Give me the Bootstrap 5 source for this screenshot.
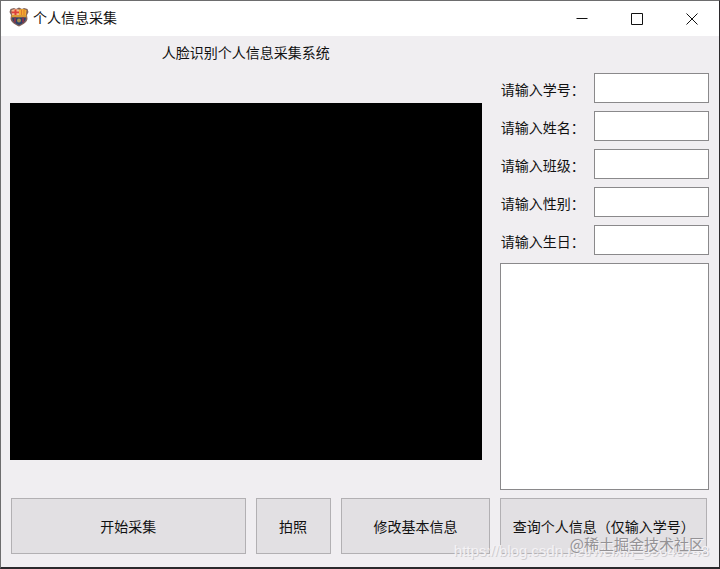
<!DOCTYPE html>
<html lang="zh-CN">
<head>
<meta charset="utf-8">
<meta name="viewport" content="width=device-width, initial-scale=1">
<title>个人信息采集</title>
<link href="https://cdn.jsdelivr.net/npm/bootstrap@5.3.0/dist/css/bootstrap.min.css" rel="stylesheet">
<style>
body{font:14px/20px "Noto Sans CJK SC",sans-serif;color:#111;background:#f0eef1}
.app-window{border:1px solid #6d6d6e;border-right-color:#2b292c;border-bottom:2px solid #2b292c}
.titlebar{height:35px;padding-bottom:3px;background:#fff}
.win-btn{width:55px;height:32px;border:0;background:none;padding:0;color:#111}
.main-area{display:grid;grid-template-columns:minmax(0,471fr) minmax(0,209fr);grid-template-rows:1fr auto;column-gap:18px;padding:0 10px 13px 9px}
.left-pane{padding-bottom:38px}
.heading{padding-top:6px;height:67px;font-size:14px;line-height:20px}
.video{background:#000;flex:1 1 auto}
.right-pane{padding-top:37px;gap:8px}
.field-label{padding:2px 0 0 1px}
.field-box{width:115px;height:30px;border:1px solid #8a898b;background:#fff;padding:2px 4px;border-radius:0}
.result{border:1px solid #8a898b;background:#fff;resize:none;flex:1 1 auto;margin-bottom:8px;border-radius:0}
.actions{display:grid;grid-template-columns:minmax(0,235fr) minmax(0,75fr) minmax(0,150fr) minmax(0,207fr);gap:10px;grid-column:1/-1;padding:0 2px 0 1px}
.act{height:56px;border:1px solid #b2b0b3;background:#e2e0e3;color:#111;padding:0;border-radius:0;white-space:nowrap}
.marks{right:0;bottom:0;pointer-events:none}
.mark-site{position:absolute;right:15px;bottom:11px;font-size:15px;line-height:24px;color:#949295;white-space:nowrap;text-shadow:1px 1px 0 #f3f1f4}
.mark-url{position:absolute;right:10px;bottom:6px;font:15px/20px "Liberation Sans",sans-serif;color:#f4f2f5;white-space:nowrap;text-shadow:1px 1px 0 #cfcdd0}
</style>
<script src="https://cdn.jsdelivr.net/npm/bootstrap@5.3.0/dist/js/bootstrap.bundle.min.js" defer></script>
</head>
<body>
<div class="app-window position-relative d-flex flex-column min-vh-100">
  <header class="titlebar d-flex align-items-center">
    <svg class="ms-2 flex-shrink-0" width="20" height="20" viewBox="0 0 20 20" aria-hidden="true">
      <path d="M1.500 2 5 1 7 2 10 .5 13 2 15 1 18.500 2 19.500 5 18 8 18.500 12C17.500 16 13 18 10 19.500C7 18 2.500 16 1.500 12L2 8 .5 5Z" fill="#80615a"/>
      <path d="M2.500 3 6 2 10 2.500V8H3Z" fill="#f5b98a"/><path d="M5.500 2.500H7.500V8H5.500ZM2.500 4.500H10V6.200H2.500Z" fill="#dc4038"/>
      <path d="M10 2.500 14 2 17.500 3 17 8H10Z" fill="#f6ab2e"/><path d="M12.500 3V8M15 3V8" stroke="#dd7a2b"/>
      <path d="M2.500 8H17.500V10.500H2.500Z" fill="#d99a35"/>
      <path d="M3 10.500H17C16.500 15 13 17 10 18C7 17 3.500 15 3 10.500Z" fill="#2c416b"/>
      <path d="M6 10.500V15.500M14 10.500V15.500" stroke="#83334b" stroke-width="2"/><circle cx="10" cy="13.500" r="2" fill="#a58e4c"/>
    </svg>
    <span class="ms-1 me-auto">个人信息采集</span>
    <button class="win-btn" type="button" aria-label="最小化"><svg width="12" height="12" viewBox="0 0 12 12"><path d="M.5 5.500H11.500" stroke="currentColor"/></svg></button>
    <button class="win-btn" type="button" aria-label="最大化"><svg width="12" height="12" viewBox="0 0 12 12"><path d="M.5.5H11.500V11.500H.5Z" fill="none" stroke="currentColor"/></svg></button>
    <button class="win-btn me-0" type="button" aria-label="关闭"><svg width="12" height="12" viewBox="0 0 12 12"><path d="M.5.5 11.500 11.500M11.500.5.5 11.500" stroke="currentColor"/></svg></button>
  </header>
  <main class="main-area flex-grow-1">
    <section class="left-pane d-flex flex-column">
      <h1 class="heading m-0 fw-normal text-center">人脸识别个人信息采集系统</h1>
      <div class="video"></div>
    </section>
    <form class="right-pane d-flex flex-column">
      <div class="d-flex align-items-center justify-content-between"><label class="field-label" for="sid">请输入学号：</label><input id="sid" class="field-box" type="text"></div>
      <div class="d-flex align-items-center justify-content-between"><label class="field-label" for="name">请输入姓名：</label><input id="name" class="field-box" type="text"></div>
      <div class="d-flex align-items-center justify-content-between"><label class="field-label" for="cls">请输入班级：</label><input id="cls" class="field-box" type="text"></div>
      <div class="d-flex align-items-center justify-content-between"><label class="field-label" for="sex">请输入性别：</label><input id="sex" class="field-box" type="text"></div>
      <div class="d-flex align-items-center justify-content-between"><label class="field-label" for="birth">请输入生日：</label><input id="birth" class="field-box" type="text"></div>
      <textarea class="result" aria-label="查询结果"></textarea>
    </form>
    <div class="actions">
      <button class="act" type="button">开始采集</button>
      <button class="act" type="button">拍照</button>
      <button class="act" type="button">修改基本信息</button>
      <button class="act" type="button">查询个人信息（仅输入学号）</button>
    </div>
  </main>
  <div class="marks position-absolute">
    <span class="mark-url">https://blog.csdn.net/weixin_39043748</span>
    <span class="mark-site">@稀土掘金技术社区</span>
  </div>
</div>
</body>
</html>
